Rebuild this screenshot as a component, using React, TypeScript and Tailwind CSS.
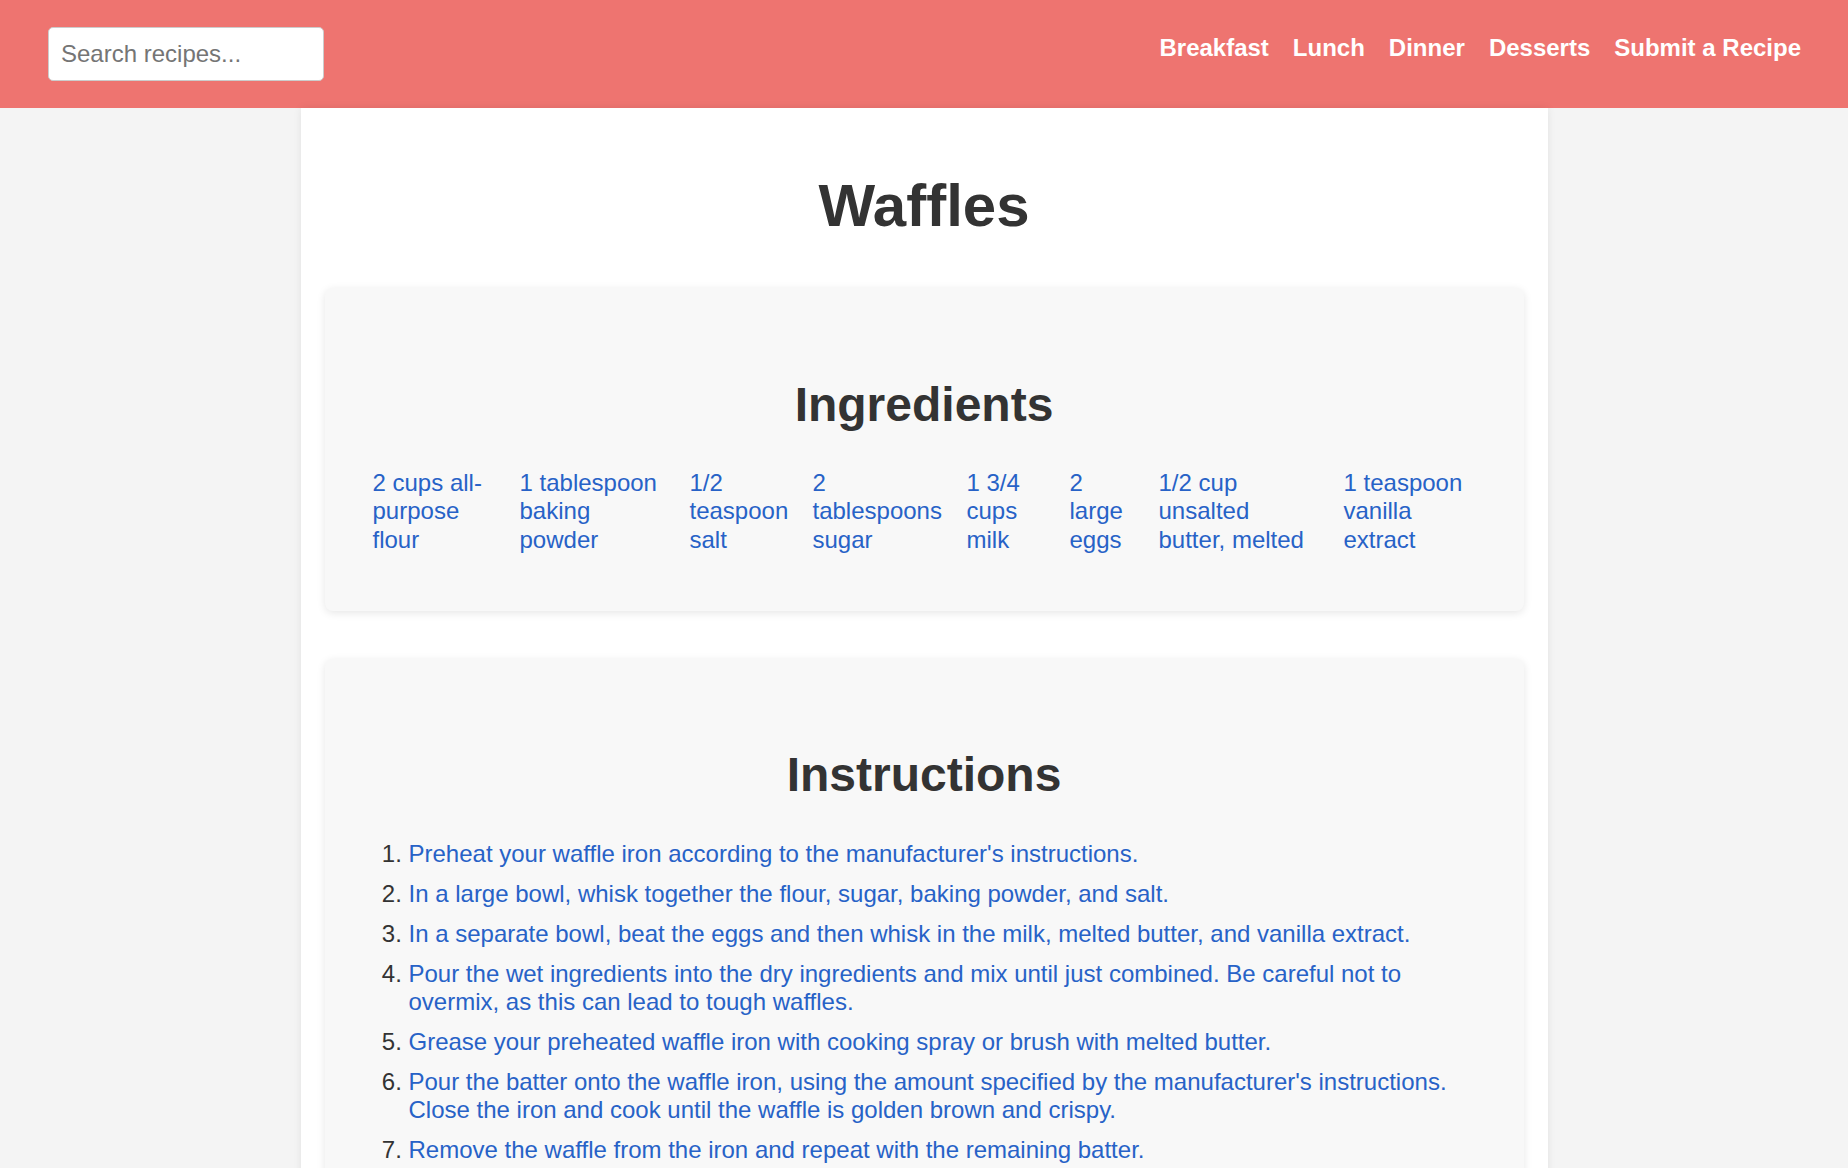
const navLinks = ['Breakfast', 'Lunch', 'Dinner', 'Desserts', 'Submit a Recipe']

// widths taken so each column starts where the reference has it
const ingredients = [
  { text: '2 cups all-purpose flour', cls: 'w-[147px] pr-[24px]' },
  { text: '1 tablespoon baking powder', cls: 'w-[170px] pr-[24px]' },
  { text: '1/2 teaspoon salt', cls: 'w-[123px] pr-[21px]' },
  { text: '2 tablespoons sugar', cls: 'w-[154px] pr-[21px]' },
  { text: '1 3/4 cups milk', cls: 'w-[103px] pr-[24px]' },
  { text: '2 large eggs', cls: 'w-[89px] pr-[24px]' },
  { text: '1/2 cup unsalted butter, melted', cls: 'w-[185px] pr-[28px]' },
  { text: '1 teaspoon vanilla extract', cls: 'w-[133px]' },
]

const steps = [
  "Preheat your waffle iron according to the manufacturer's instructions.",
  'In a large bowl, whisk together the flour, sugar, baking powder, and salt.',
  'In a separate bowl, beat the eggs and then whisk in the milk, melted butter, and vanilla extract.',
  'Pour the wet ingredients into the dry ingredients and mix until just combined. Be careful not to overmix, as this can lead to tough waffles.',
  'Grease your preheated waffle iron with cooking spray or brush with melted butter.',
  "Pour the batter onto the waffle iron, using the amount specified by the manufacturer's instructions. Close the iron and cook until the waffle is golden brown and crispy.",
  'Remove the waffle from the iron and repeat with the remaining batter.',
  'Serve the waffles warm with your favorite toppings, such as syrup, fresh fruit, or whipped cream.',
]

export default function App() {
  return (
    <div className="min-h-screen bg-[#f4f4f4] font-['Liberation_Sans',Arial,sans-serif] text-[#333]">
      {/* Header */}
      <header className="h-[108px] bg-[#ee7470] flex items-center justify-between pl-[48px] pr-[47px]">
        <input
          type="text"
          placeholder="Search recipes..."
          className="w-[276px] h-[54px] bg-white border border-[#ccc] rounded-[5px] px-[12px] text-[24px] text-[#333] placeholder:text-[#757575] outline-none"
        />
        <nav className="flex items-center gap-[24px] pb-[14px]">
          {navLinks.map((link) => (
            <a key={link} href="#" className="text-white font-bold text-[24px] leading-[27px]">
              {link}
            </a>
          ))}
        </nav>
      </header>

      {/* Recipe */}
      <main className="w-[1247px] mx-auto bg-white shadow-[0_0_8px_rgba(0,0,0,0.08)] px-[24px] pt-[64px] pb-[48px]">
        <h1 className="text-center font-bold text-[60px] leading-[68px] text-[#333]">Waffles</h1>

        <section className="mt-[48px] bg-[#f8f8f8] rounded-[8px] shadow-[0_2px_8px_rgba(0,0,0,0.1)] px-[48px] pt-[90px] pb-[57px]">
          <h2 className="text-center font-bold text-[48px] leading-[54px] text-[#333]">Ingredients</h2>
          <ul className="flex mt-[37px]">
            {ingredients.map((item) => (
              <li key={item.text} className={`${item.cls} shrink-0 text-[24px] leading-[28.3px] text-[#2762c7]`}>
                {item.text}
              </li>
            ))}
          </ul>
        </section>

        <section className="mt-[48px] bg-[#f8f8f8] rounded-[8px] shadow-[0_2px_8px_rgba(0,0,0,0.1)] px-[48px] pt-[89px] pb-[59px]">
          <h2 className="text-center font-bold text-[48px] leading-[54px] text-[#333]">Instructions</h2>
          <ol className="list-decimal pl-[36px] mt-[38px]">
            {steps.map((step) => (
              <li key={step} className="text-[24px] leading-[28.3px] text-[#333] mb-[11.7px]">
                <span className="text-[#2762c7]">{step}</span>
              </li>
            ))}
          </ol>
        </section>
      </main>
    </div>
  )
}
